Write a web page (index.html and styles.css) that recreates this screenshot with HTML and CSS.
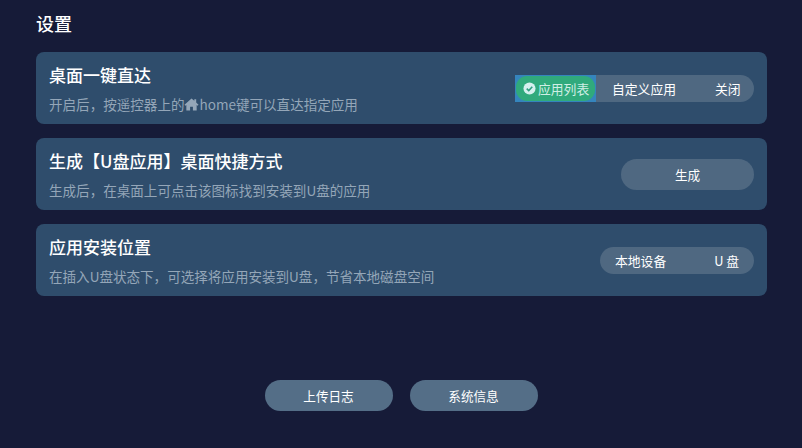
FILE: index.html
```html
<!DOCTYPE html>
<html lang="zh-CN">
<head>
    <meta charset="UTF-8">
    <meta name="viewport" content="width=device-width, initial-scale=1.0">
    <title>设置</title>
    <link rel="stylesheet" href="styles.css">
</head>
<body>

    <div class="page">
        <h1 class="page-title">设置</h1>

        <div class="card">
            <div class="card-text">
                <h2>桌面一键直达</h2>
                <p>开启后，按遥控器上的<svg class="home-icon" viewBox="0 0 16 16"><path d="M8 1.5 0.5 8.2 1.5 9.2 2.5 8.4V14.5h4v-4h3v4h4V8.4l1 0.8 1-1L13 5.8V2.5h-2v1.5z"/></svg>home键可以直达指定应用</p>
            </div>
            <div class="segment segment-launch">
                <div class="segment-item active">
                    <div class="active-pill">
                        <svg class="check-icon" viewBox="0 0 14 14"><circle cx="7" cy="7" r="6.5" fill="#d5f0ee"/><path d="M4 7.2 6.2 9.3 10 5.2" fill="none" stroke="#2f9f80" stroke-width="1.7"/></svg>
                        <span>应用列表</span>
                    </div>
                </div>
                <div class="segment-item custom">自定义应用</div>
                <div class="segment-item off">关闭</div>
            </div>
        </div>

        <div class="card">
            <div class="card-text">
                <h2>生成【U盘应用】桌面快捷方式</h2>
                <p>生成后，在桌面上可点击该图标找到安装到U盘的应用</p>
            </div>
            <button class="pill pill-generate">生成</button>
        </div>

        <div class="card">
            <div class="card-text">
                <h2>应用安装位置</h2>
                <p>在插入U盘状态下，可选择将应用安装到U盘，节省本地磁盘空间</p>
            </div>
            <div class="segment segment-location">
                <div class="segment-item local">本地设备</div>
                <div class="segment-item usb">U 盘</div>
            </div>
        </div>

        <div class="footer">
            <button class="pill pill-footer">上传日志</button>
            <button class="pill pill-footer">系统信息</button>
        </div>
    </div>

</body>
</html>
```
FILE: styles.css
```css
:root {
    --bg-color: #161b38;
    --card-color: #2f4d6c;
    --pill-color: #4f6881;
    --footer-pill-color: #546e87;
    --green-color: #30aa7c;
    --blue-color: #3585bd;
    --text-light-color: #94a6b8;
    --font-family: "Noto Sans CJK SC", "Noto Sans", sans-serif;
}

* {
    margin: 0;
    padding: 0;
    box-sizing: border-box;
}

body {
    background: var(--bg-color);
    color: #fff;
    font-family: var(--font-family);
    height: 448px;
    overflow: hidden;
}

.page {
    padding: 0 35px 0 36px;
}

.page-title {
    font-size: 18px;
    font-weight: 500;
    line-height: 26px;
    padding-top: 10px;
    margin-bottom: 16px;
}

/* 设置卡片 */
.card {
    display: flex;
    align-items: center;
    justify-content: space-between;
    height: 72px;
    margin-bottom: 14px;
    padding: 0 13px;
    background: var(--card-color);
    border-radius: 8px;
}

.card-text {
    padding-top: 1px;
}

.card-text h2 {
    font-size: 17px;
    font-weight: 500;
    line-height: 24px;
    margin-bottom: 7px;
}

.card-text p {
    font-size: 13.55px;
    line-height: 20px;
    color: var(--text-light-color);
}

.home-icon {
    width: 15px;
    height: 15px;
    vertical-align: -2px;
    fill: var(--text-light-color);
}

/* 分段選擇 */
.segment {
    display: flex;
    align-items: center;
    height: 27px;
    background: var(--pill-color);
    border-radius: 14px;
    font-size: 12.8px;
}

.segment-launch {
    width: 239px;
}

.segment-location {
    width: 154px;
}

.segment-item {
    line-height: 27px;
    white-space: nowrap;
}

.segment-item.active {
    width: 81px;
    height: 27px;
    padding: 1px;
    background: var(--blue-color);
}

.active-pill {
    display: flex;
    align-items: center;
    gap: 2px;
    height: 25px;
    padding-left: 7px;
    background: var(--green-color);
    border-radius: 11px;
    color: #cfeee4;
}

.check-icon {
    width: 13px;
    height: 13px;
}

.segment-item.custom {
    margin-left: 16px;
}

.segment-item.off {
    margin-left: 39px;
}

.segment-item.local {
    margin-left: 15px;
}

.segment-item.usb {
    margin-left: 48px;
}

/* 按鈕 */
.pill {
    border: none;
    border-radius: 16px;
    color: #fff;
    font-family: inherit;
    font-size: 12.6px;
    height: 31px;
}

.pill-generate {
    width: 133px;
    background: var(--pill-color);
}

.footer {
    display: flex;
    justify-content: center;
    gap: 17px;
    margin-top: 84px;
    padding-right: 1px;
}

.pill-footer {
    width: 128px;
    background: var(--footer-pill-color);
}
```
